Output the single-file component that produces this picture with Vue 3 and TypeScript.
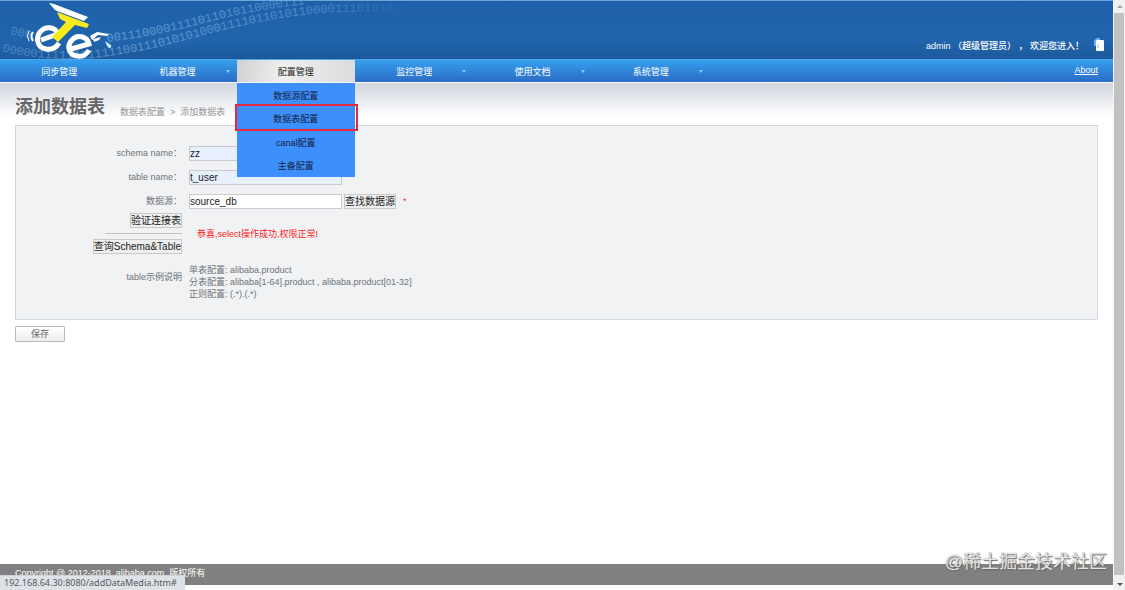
<script setup lang="ts">
import { ref } from 'vue'

interface MenuItem {
  label: string
  arrow: boolean
  children?: string[]
}

const menu: MenuItem[] = [
  { label: '同步管理', arrow: false },
  { label: '机器管理', arrow: true },
  { label: '配置管理', arrow: false, children: ['数据源配置', '数据表配置', 'canal配置', '主备配置'] },
  { label: '监控管理', arrow: true },
  { label: '使用文档', arrow: true },
  { label: '系统管理', arrow: true },
]
const marked = '数据表配置'

const schemaName = ref('zz')
const tableName = ref('t_user')
const source = ref('source_db')
</script>

<template>
  <div class="window">
    <div class="page">
      <header class="banner">
        <svg class="art" width="440" height="59" viewBox="0 0 440 59" aria-hidden="true">
          <defs>
            <path id="stream-low" d="M2 51 C25 58 60 60 92 58 C130 54 165 46 200 36 C245 24 290 14 340 12 C370 11 400 12 430 14" />
            <path id="stream-left" d="M10 34 L34 39" />
            <path id="stream-high" d="M107 42 C140 38 170 32 200 24 C230 16 260 9 315 3" />
            <linearGradient id="fade" gradientUnits="userSpaceOnUse" x1="0" y1="0" x2="420" y2="0">
              <stop offset="0" stop-color="#7db6e6" stop-opacity="0.4" />
              <stop offset="0.3" stop-color="#8fc4ee" stop-opacity="0.55" />
              <stop offset="0.75" stop-color="#7db6e6" stop-opacity="0.45" />
              <stop offset="0.98" stop-color="#7db6e6" stop-opacity="0" />
            </linearGradient>
          </defs>
          <g class="digits" fill="url(#fade)">
            <text><textPath href="#stream-low">000001111111111110011101010100011110110101100001110101011</textPath></text>
            <text><textPath href="#stream-left">000</textPath></text>
            <text><textPath href="#stream-high">0011100001111011010110000111</textPath></text>
          </g>
          <g fill="none" stroke="#fff">
            <path d="M29 31 q-3 5 0 10" stroke-width="1" />
            <path d="M33 32 q-3 4 0 9" stroke-width="2" />
            <path d="M41 40 L58 34 C55 26 45 26 40 32 C35 39 38 48 46 49 C52 50 56 48 59 43" stroke-width="5" />
            <path d="M71 49 L89 44 C87 36 77 34 72 40 C66 46 69 56 78 56 C83 57 87 54 89 50" stroke-width="5" />
          </g>
          <path d="M49 3 L54 4 L88 17 L84 21 L57 11 L55 10 Z" fill="#fff" />
          <path d="M57 12 L89 24 L87 28 L75 25 L58 42 L52 37 L66 22 L60 19 Z" fill="#f7ea1c" />
          <path d="M90 36 L97 32 L109 34 L107 36 L98 35 L92 40 Z M93 39 L101 37 L99 40 L94 42 Z" fill="#fff" />
          <path d="M105 41 L111 45 q1 3 -2 3 q-2 -1 -4 -7 Z" fill="#c9f0fb" />
        </svg>
        <p class="welcome">admin （超级管理员） ， 欢迎您进入！</p>
        <button class="exit" type="button" aria-label="退出">
          <svg width="11" height="14" viewBox="0 0 11 14">
            <path d="M1 8 V3 L3 1 H6" fill="none" stroke="#67b3f2" stroke-width="2" />
            <rect x="2" y="2" width="8" height="11" rx="1" fill="#fff" />
            <path d="M3 6 h2 v4 h-2 Z" fill="#d3dfec" />
          </svg>
        </button>
      </header>

      <nav class="nav">
        <ul class="menu">
          <li v-for="item in menu" :key="item.label" class="entry" :class="{ open: item.children }">
            <a class="link" href="#">{{ item.label }}</a>
            <i v-if="item.arrow" class="arrow"></i>
            <ul v-if="item.children" class="sub">
              <li v-for="child in item.children" :key="child" :class="{ marked: child === marked }">
                <a href="#">{{ child }}</a>
              </li>
            </ul>
          </li>
        </ul>
        <a class="about" href="#">About</a>
      </nav>

      <main class="main">
        <div class="heading">
          <h1>添加数据表</h1>
          <p class="crumbs"><a href="#">数据表配置</a><span>&gt;</span><span>添加数据表</span></p>
        </div>

        <form @submit.prevent>
          <div class="panel">
            <label for="schema">schema name：</label>
            <div class="field"><input id="schema" v-model="schemaName" class="filled" type="text" /></div>

            <label for="table">table name：</label>
            <div class="field"><input id="table" v-model="tableName" class="filled" type="text" /></div>

            <label for="source">数据源：</label>
            <div class="field">
              <input id="source" v-model="source" type="text" />
              <button class="plain" type="button">查找数据源</button>
              <span class="star">*</span>
            </div>

            <div class="checks">
              <button class="plain" type="button">验证连接表</button>
              <hr />
              <button class="plain" type="button">查询Schema&amp;Table</button>
            </div>
            <p class="result">恭喜,select操作成功,权限正常!</p>

            <span class="caption">table示例说明</span>
            <p class="notes">
              单表配置: alibaba.product<br />
              分表配置: alibaba[1-64].product , alibaba.product[01-32]<br />
              正则配置: (.*).(.*)
            </p>
          </div>
          <button class="save" type="submit">保存</button>
        </form>
      </main>

      <footer class="footer">Copyright @ 2012-2018, alibaba.com, 版权所有</footer>
    </div>

    <div class="scrollbar" aria-hidden="true">
      <svg width="12" height="13" viewBox="0 0 12 13"><path d="M3 8 L6 5 L9 8 Z" fill="#a3a3a3" /></svg>
      <div class="thumb"></div>
      <svg width="12" height="15" viewBox="0 0 12 15"><path d="M3 8 L9 8 L6 11 Z" fill="#505050" /></svg>
    </div>

    <div class="status">192.168.64.30:8080/addDataMedia.htm#</div>
    <div class="watermark">@稀土掘金技术社区</div>
  </div>
</template>

<style>
body {
  margin: 0;
  background: #fff;
}
</style>

<style scoped>
.window {
  display: flex;
  min-height: 100vh;
  position: relative;
  font: 9px/12px "Liberation Sans", "Noto Sans CJK SC", sans-serif;
  color: #6f7378;
}
.window * {
  box-sizing: border-box;
}
p, h1, ul {
  margin: 0;
  padding: 0;
}
ul {
  list-style: none;
}
a {
  color: inherit;
  text-decoration: none;
}
button, input {
  font: inherit;
  margin: 0;
}
.page {
  flex: 1;
  min-width: 0;
  display: flex;
  flex-direction: column;
  padding-bottom: 5px;
}
.banner {
  position: relative;
  display: flex;
  justify-content: flex-end;
  align-items: flex-end;
  height: 59px;
  padding: 0 8px 7px 0;
  border-top: 1px solid #6ea6db;
  background: linear-gradient(#1e61aa, #2064ac 70%, #1c599b);
  color: #fff;
}
.art {
  position: absolute;
  left: 0;
  top: -1px;
}
.digits {
  font: 12px "Liberation Mono", monospace;
}
.welcome {
  white-space: pre;
  font-weight: 500;
}
.exit {
  display: flex;
  margin-left: 10px;
  padding: 0;
  border: 0;
  background: none;
}
.nav {
  display: flex;
  justify-content: space-between;
  height: 24px;
  padding-right: 15px;
  border-top: 1px solid #4ea2e6;
  border-bottom: 1px solid #f3f6fa;
  background: linear-gradient(#359fed, #2c6cc5);
  color: #fff;
}
.menu {
  display: grid;
  grid-template-columns: repeat(6, 1fr);
  width: 65%;
  max-width: 710px;
}
.entry {
  position: relative;
}
.link {
  display: block;
  line-height: 25px;
  height: 22px;
  text-align: center;
}
.open {
  background: linear-gradient(100deg, #cfd1d3, #efefef 40%, #d9dbdd);
  color: #222;
}
.arrow {
  position: absolute;
  right: 7px;
  top: 10px;
  border: 2px solid transparent;
  border-top: 3px solid #8cc8f8;
  border-bottom: 0;
}
.sub {
  position: absolute;
  z-index: 2;
  top: 23px;
  left: 0;
  right: 0;
  display: grid;
  grid-template-rows: 23px 24px 23px 24px;
  background: #3d8ffc;
  color: #14243c;
  text-align: center;
  line-height: 24px;
}
.sub li {
  position: relative;
  padding-top: 1px;
}
.sub a {
  display: block;
  height: 22px;
}
.marked::after {
  content: "";
  position: absolute;
  inset: -2px -3px -1px -2px;
  border: 2px solid #e42a3c;
  pointer-events: none;
}
.about {
  line-height: 20px;
  text-decoration: underline;
}
.main {
  flex: 1;
  padding: 0 15px;
  background: linear-gradient(#d1d6de, #fff 34px);
}
.heading {
  display: flex;
  align-items: flex-end;
  gap: 15px;
  height: 42px;
  padding-bottom: 7px;
}
h1 {
  font-size: 18px;
  line-height: 22px;
  color: #666;
}
.crumbs {
  display: flex;
  gap: 5px;
  color: #969696;
}
.panel {
  display: grid;
  grid-template-columns: 166px 1fr;
  grid-template-rows: 24px 24px 24px 41px auto;
  column-gap: 7px;
  align-items: center;
  padding: 15px 0 19px;
  border: 1px solid #d3d9e0;
  background: #f0f2f4;
}
.panel label, .caption {
  text-align: right;
}
.field {
  display: flex;
  align-items: center;
  gap: 2px;
}
input {
  width: 153px;
  height: 15px;
  padding: 0;
  border: 1px solid #c9cbd0;
  background: #fff;
  color: #222;
  font-size: 10px;
}
input.filled {
  background: #e8effd;
}
.plain {
  height: 15px;
  padding: 0;
  border: 1px solid #c8c8c8;
  background: #efefef;
  color: #222;
  font-size: 10px;
  line-height: 13px;
  white-space: nowrap;
}
.star {
  margin-left: 5px;
  color: #f33;
}
.checks {
  display: flex;
  flex-direction: column;
  align-items: flex-end;
  justify-content: space-between;
  height: 41px;
}
hr {
  width: 77px;
  height: 1px;
  margin: 0;
  border: 0;
  background: #c2c4c6;
}
.result {
  padding-left: 8px;
  color: #fb2424;
}
.notes {
  margin-top: 10px;
}
.save {
  display: block;
  width: 50px;
  height: 16px;
  margin-top: 6px;
  padding: 0;
  border: 1px solid #bcbcbc;
  border-radius: 1px;
  background: linear-gradient(#fff, #ededed);
  color: #666;
  line-height: 12px;
}
.footer {
  height: 21px;
  padding: 0 15px;
  background: #808080;
  color: #fff;
  line-height: 19px;
}
.scrollbar {
  display: flex;
  flex-direction: column;
  flex: none;
  width: 12px;
  border-left: 1px solid #f6f6f6;
  background: #f1f1f1;
}
.thumb {
  flex: 1;
  margin-right: 1px;
  background: #c1c1c1;
}
.status {
  position: absolute;
  left: 0;
  bottom: 0;
  padding: 0 8px 0 4px;
  border-top: 1px solid #cfd3d8;
  border-radius: 0 2px 0 0;
  background: #dee1e6;
  color: #55595f;
  font: 9px/14px "Noto Sans", sans-serif;
}
.watermark {
  position: absolute;
  right: 18px;
  bottom: 16px;
  color: #e4e4e4;
  font-size: 18px;
  line-height: 24px;
  text-shadow: 1px 1px 1px #666, 0 0 1px #888;
}
</style>
